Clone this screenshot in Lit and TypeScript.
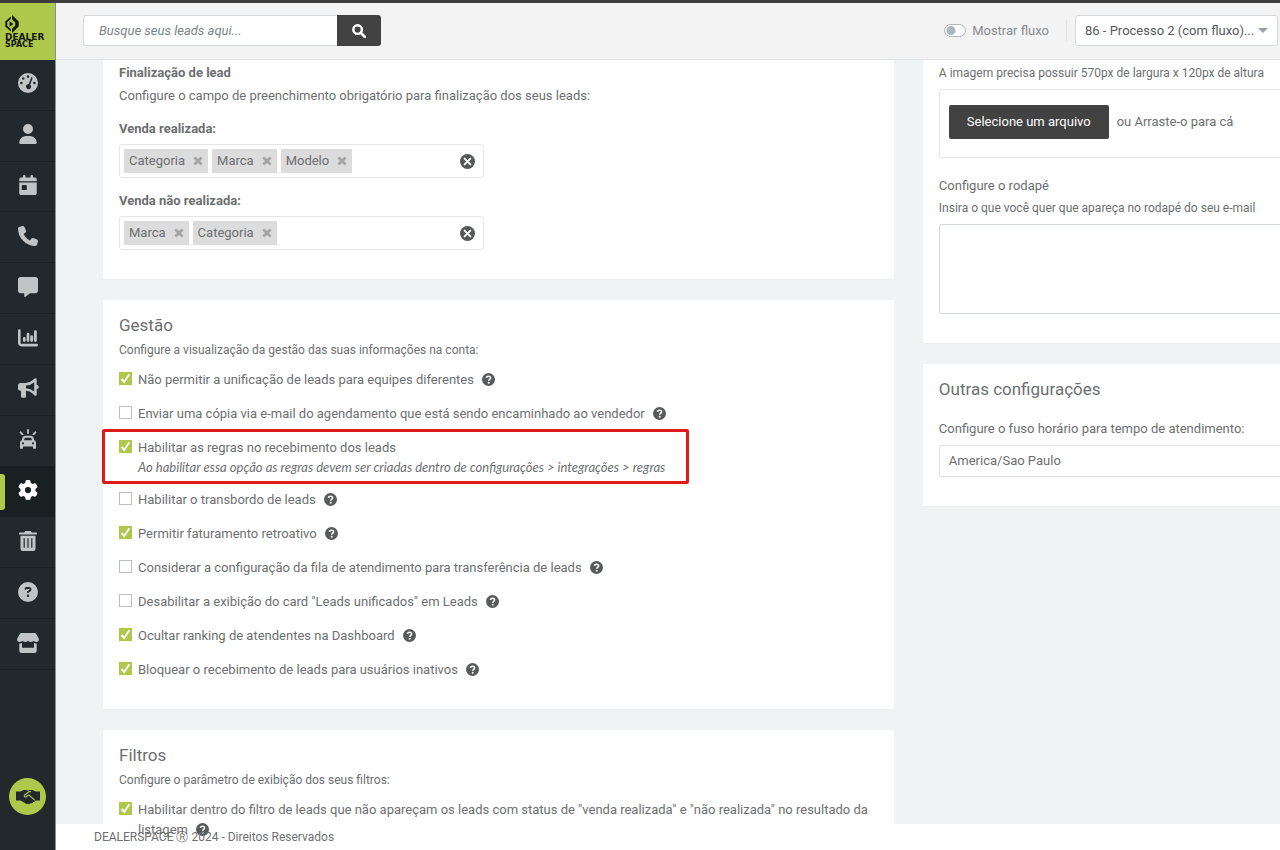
import { LitElement, html, css, svg, nothing, type TemplateResult } from "lit";
import { customElement, property, state } from "lit/decorators.js";
import { classMap } from "lit/directives/class-map.js";

const icons: Record<string, { box: string; shape: TemplateResult<2> }> = {
  gauge: {
    box: "0 0 20 20",
    shape: svg`<path fill-rule="evenodd" d="M10 0a10 10 0 1 0 0 20a10 10 0 0 0 0-20zM10 2.3a1.3 1.3 0 1 1 0 2.6a1.3 1.3 0 0 1 0-2.6zM5.2 4.2a1.3 1.3 0 1 1 0 2.6a1.3 1.3 0 0 1 0-2.6zM3.4 8.7a1.3 1.3 0 1 1 0 2.6a1.3 1.3 0 0 1 0-2.6zM16.4 8.7a1.3 1.3 0 1 1 0 2.6a1.3 1.3 0 0 1 0-2.6zM13.2 4.4a.8.8 0 0 1 1.4.7l-2.4 6.6a2.6 2.6 0 1 1-1.5-.6z"/>`,
  },
  user: {
    box: "0 0 448 512",
    shape: svg`<path d="M224 256A128 128 0 1 0 224 0a128 128 0 1 0 0 256zm-45.7 48C79.8 304 0 383.8 0 482.3C0 498.7 13.3 512 29.7 512H418.3c16.4 0 29.7-13.3 29.7-29.7C448 383.8 368.2 304 269.7 304H178.3z"/>`,
  },
  calendar: {
    box: "0 0 448 512",
    shape: svg`<path d="M128 0c17.7 0 32 14.3 32 32V64H288V32c0-17.7 14.3-32 32-32s32 14.3 32 32V64h48c26.5 0 48 21.5 48 48v48H0V112C0 85.5 21.5 64 48 64H96V32c0-17.7 14.3-32 32-32zM0 192H448V464c0 26.5-21.5 48-48 48H48c-26.5 0-48-21.5-48-48V192zm80 64c-8.8 0-16 7.2-16 16v96c0 8.8 7.2 16 16 16h96c8.8 0 16-7.2 16-16V272c0-8.8-7.2-16-16-16H80z"/>`,
  },
  phone: {
    box: "0 0 512 512",
    shape: svg`<path d="M164.9 24.6c-7.7-18.6-28-28.5-47.4-23.2l-88 24C12.1 30.2 0 46 0 64C0 311.4 200.6 512 448 512c18 0 33.8-12.1 38.6-29.5l24-88c5.3-19.4-4.6-39.7-23.2-47.4l-96-40c-16.3-6.8-35.2-2.1-46.3 11.6L304.7 368C234.3 334.7 177.3 277.7 144 207.3L193.3 167c13.7-11.2 18.4-30 11.6-46.3l-40-96z"/>`,
  },
  message: {
    box: "0 0 512 512",
    shape: svg`<path d="M64 0C28.7 0 0 28.7 0 64V352c0 35.3 28.7 64 64 64h96v80c0 6.1 3.4 11.6 8.8 14.3s11.9 2.1 16.8-1.5L309.3 416H448c35.3 0 64-28.7 64-64V64c0-35.3-28.7-64-64-64H64z"/>`,
  },
  chart: {
    box: "0 0 20 20",
    shape: svg`<g fill="none" stroke="currentColor" stroke-linecap="round" stroke-linejoin="round"><path stroke-width="2.6" d="M1.3 2.5v12.4a2.2 2.2 0 0 0 2.2 2.2h15.2"/><path stroke-width="2.8" d="M6.3 10.4v2.2M10 6.2v6.4M13.7 8.6v4M17.4 3.6v9"/></g>`,
  },
  megaphone: {
    box: "0 0 20 20",
    shape: svg`<path fill-rule="evenodd" d="M17.5.3a1.2 1.2 0 0 1 1.2 1.2v5.4a2 2 0 0 1 0 4.2v5.4a1.2 1.2 0 0 1-2.1.9l-1.7-1.7A10.500 10.500 0 0 0 8 12.800v5.700A1.300 1.300 0 0 1 6.700 19.800H4.300A1.300 1.300 0 0 1 3 18.500V12.800H2.500A2.500 2.500 0 0 1 0 10.300V7.500A2.500 2.500 0 0 1 2.500 5h4.900a10.500 10.500 0 0 0 7.400-3l1.800-1.400a1.200 1.200 0 0 1 .9-.3zM16.200 4.200A13 13 0 0 1 8 7.500v2.800a13 13 0 0 1 8.200 3.300z"/>`,
  },
  car: {
    box: "0 0 20 20",
    shape: svg`<path fill="none" stroke="currentColor" stroke-width="1.8" stroke-linecap="round" d="M10 1v3.200M2.500 3.300l2 2M17.500 3.300l-2 2"/><path fill-rule="evenodd" d="M6.800 6.800h6.400a2.200 2.200 0 0 1 2.100 1.500l1 3A2.600 2.600 0 0 1 18 13.700v5.200a.9.900 0 0 1-.9.900h-1.200a.9.900 0 0 1-.9-.9v-1.500H5v1.500a.9.900 0 0 1-.9.900H2.900a.9.900 0 0 1-.9-.9v-5.200a2.600 2.600 0 0 1 1.700-2.400l1-3a2.200 2.200 0 0 1 2.100-1.500zM7.200 8.800a.5.500 0 0 0-.5.400L6 11.200h8l-.7-2a.5.500 0 0 0-.5-.4zM5 13.200a1.100 1.100 0 1 0 0 2.200a1.100 1.100 0 0 0 0-2.200zM15 13.200a1.100 1.100 0 1 0 0 2.200a1.100 1.100 0 0 0 0-2.200z"/>`,
  },
  gear: {
    box: "0 0 512 512",
    shape: svg`<path d="M495.9 166.6c3.2 8.7 .5 18.4-6.4 24.6l-43.3 39.4c1.1 8.300 1.700 16.800 1.700 25.400s-.6 17.100-1.700 25.400l43.300 39.400c6.900 6.200 9.600 15.900 6.400 24.600c-4.400 11.900-9.700 23.300-15.800 34.300l-4.700 8.100c-6.600 11-14 21.400-22.100 31.200c-5.900 7.200-15.700 9.600-24.500 6.800l-55.700-17.700c-13.400 10.300-28.200 18.900-44 25.400l-12.500 57.100c-2 9.100-9 16.300-18.200 17.800c-13.800 2.300-28 3.500-42.500 3.500s-28.700-1.200-42.500-3.500c-9.200-1.500-16.200-8.700-18.200-17.800l-12.500-57.100c-15.800-6.500-30.600-15.100-44-25.400L83.100 425.900c-8.800 2.800-18.600 .3-24.500-6.800c-8.100-9.800-15.500-20.200-22.100-31.200l-4.700-8.100c-6.100-11-11.400-22.400-15.800-34.300c-3.200-8.700-.5-18.400 6.400-24.600l43.300-39.400C64.600 273.100 64 264.600 64 256s.6-17.100 1.700-25.400L22.400 191.200c-6.900-6.200-9.600-15.900-6.400-24.600c4.400-11.900 9.700-23.300 15.800-34.300l4.700-8.100c6.600-11 14-21.400 22.100-31.200c5.900-7.200 15.700-9.600 24.500-6.800l55.700 17.700c13.400-10.300 28.200-18.900 44-25.400l12.500-57.100c2-9.100 9-16.300 18.200-17.800C227.300 1.200 241.500 0 256 0s28.700 1.200 42.500 3.500c9.200 1.500 16.200 8.700 18.200 17.800l12.500 57.100c15.800 6.500 30.600 15.100 44 25.400l55.700-17.700c8.800-2.800 18.600-.3 24.500 6.800c8.100 9.800 15.500 20.200 22.100 31.200l4.700 8.100c6.100 11 11.400 22.400 15.800 34.300zM256 336a80 80 0 1 0 0-160 80 80 0 1 0 0 160z"/>`,
  },
  trash: {
    box: "0 0 20 20",
    shape: svg`<path fill-rule="evenodd" d="M7.300 0h5.400l1.100 1.400H18a1 1 0 0 1 0 2.200H2a1 1 0 0 1 0-2.200h4.200zM2.500 4.800h15v12.700A2.500 2.500 0 0 1 15 20H5a2.500 2.500 0 0 1-2.500-2.500zM5.600 7.200v9.600h1.200V7.200zM9.400 7.200v9.600h1.200V7.200zM13.200 7.200v9.600h1.200V7.200z"/>`,
  },
  question: {
    box: "0 0 512 512",
    shape: svg`<path d="M256 512A256 256 0 1 0 256 0a256 256 0 1 0 0 512zM169.800 165.300c7.900-22.300 29.100-37.300 52.800-37.300h58.300c34.900 0 63.100 28.300 63.100 63.100c0 22.600-12.100 43.500-31.700 54.800L280 264.400c-.2 13-10.900 23.600-24 23.600c-13.300 0-24-10.700-24-24V250.500c0-8.600 4.600-16.500 12.100-20.800l44.300-25.400c4.700-2.700 7.600-7.700 7.600-13.100c0-8.400-6.800-15.100-15.100-15.100H222.600c-3.400 0-6.400 2.100-7.500 5.300l-.4 1.200c-4.400 12.500-18.200 19-30.600 14.600s-19-18.200-14.600-30.600l.4-1.200zM224 352a32 32 0 1 1 64 0 32 32 0 1 1 -64 0z"/>`,
  },
  help: {
    box: "0 0 13 13",
    shape: svg`<circle cx="6.500" cy="6.500" r="6.500"/><path fill="none" stroke="#fff" stroke-width="1.600" d="M4.500 5.100c0-1.300.9-1.900 2-1.900s2.100.6 2.100 1.700c0 1.500-1.900 1.300-1.900 2.800"/><circle cx="6.700" cy="9.700" r="1" fill="#fff"/>`,
  },
  store: {
    box: "0 0 22 20",
    shape: svg`<path d="M4.300 0h13.400a1.500 1.500 0 0 1 1.300.7l2.500 4.200c1.100 1.900 0 4.100-2.100 4.100q-1.700 0-2.800-1.300q-1.100 1.300-2.800 1.300t-2.800-1.300q-1.100 1.300-2.800 1.300t-2.800-1.300q-1.100 1.300-2.800 1.300C.5 9-.6 6.800.5 4.900L3 .7A1.500 1.500 0 0 1 4.300 0zM2.300 10.400q1.500.1 2.700-.4v4.800h12V10q1.200.5 2.700.4v7.100a2.500 2.500 0 0 1-2.500 2.500H4.800a2.500 2.500 0 0 1-2.500-2.500z"/>`,
  },
  search: {
    box: "0 0 14 14",
    shape: svg`<circle cx="5.600" cy="5.600" r="4.300" fill="none" stroke="currentColor" stroke-width="2.400"/><path d="M9 9l4 4" stroke="currentColor" stroke-width="2.600" stroke-linecap="round"/>`,
  },
  clear: {
    box: "0 0 14 14",
    shape: svg`<circle cx="7" cy="7" r="7"/><path d="M4.300 4.300l5.400 5.400M9.700 4.300l-5.400 5.400" stroke="#fff" stroke-width="1.800" stroke-linecap="round"/>`,
  },
  cross: {
    box: "0 0 10 10",
    shape: svg`<path d="M1.400 1.400l7.200 7.200M8.600 1.400l-7.200 7.200" stroke="currentColor" stroke-width="2.800"/>`,
  },
  handshake: {
    box: "0 0 24 14",
    shape: svg`<path d="M0 1.500h4.500L7.500 0h3l1.500.8L13.500 0h3l3.200 1.500H24v9h-4.500a2 2 0 0 1-2.300 1.400a2 2 0 0 1-2.400 1.200a2.300 2.300 0 0 1-3 .6a2.600 2.600 0 0 1-2.600-.5L4.500 10.500H0z"/><path fill="none" stroke="#adc84b" stroke-width="1.200" stroke-linecap="round" stroke-linejoin="round" d="M14.500 1.600h-1.300L8.700 4.900a1.200 1.200 0 0 0 1.700 1.700l2.400-1.700 5.700 5"/>`,
  },
};

const icon = (name: string, cls = "icon") =>
  html`<svg class=${cls} viewBox=${icons[name].box} fill="currentColor" aria-hidden="true">${icons[name].shape}</svg>`;

const textColor = css`#6c6f71`;

@customElement("side-menu")
class SideMenu extends LitElement {
  static styles = css`
    :host { display: flex; flex-direction: column; background: #22292c; border-right: 1px solid #8b9192; }
    .logo { display: flex; flex-direction: column; height: 57px; box-sizing: border-box; padding: 12px 0 0 5px; background: #adc84b; color: #16190c; text-decoration: none; font: bold 9px/8px "DejaVu Sans", sans-serif; }
    .mark { width: 14px; height: 18px; }
    .light { font-size: 8px; line-height: 8px; }
    .menu { list-style: none; margin: 0; padding: 0; height: 610px; display: flex; flex-direction: column; }
    .item { flex: 1; display: flex; border-bottom: 1px solid #1a2023; }
    .link { flex: 1; display: flex; align-items: center; justify-content: center; padding-bottom: 3px; color: #c0c4c5; }
    .active { background: #1a1f22; color: #fff; }
    .active .link { color: #fff; position: relative; }
    .active .link::before { content: ""; position: absolute; left: 0; top: 7px; bottom: 6px; width: 5px; background: #adc84b; border-radius: 0 3px 3px 0; }
    .icon { width: 22px; height: 20px; }
    .deal { margin: auto auto 35px; width: 37px; height: 37px; border: 0; border-radius: 50%; padding: 0; display: grid; place-items: center; background: #adc84b; color: #22292c; }
    .shake { width: 24px; height: 14px; }
  `;
  private entries = [
    ["gauge", "Dashboard"], ["user", "Clientes"], ["calendar", "Agenda"], ["phone", "Telefonia"],
    ["message", "Mensagens"], ["chart", "Relatórios"], ["megaphone", "Campanhas"], ["car", "Veículos"],
    ["gear", "Configurações"], ["trash", "Lixeira"], ["question", "Ajuda"], ["store", "Loja"],
  ];
  render() {
    return html`
      <a class="logo" href="#">
        <svg class="mark" viewBox="0 0 14 18" fill="currentColor" aria-hidden="true"><path d="M5.800 1.500L.3 6.500v5l5.500 5v-2.300L2.200 10.700V7.300L5.800 3.800zM7 0l6.700 6.500v5L7 18v-4.200l3.300-3.300v-3L7 4.200zM4.600 6.200L8.400 9l-3.800 2.800z"/></svg>
        <span>DEALER</span><span class="light">SPACE</span>
      </a>
      <ul class="menu">
        ${this.entries.map(([name, label]) => html`
          <li class=${classMap({ item: true, active: name === "gear" })}>
            <a class="link" href="#" aria-label=${label}>${icon(name)}</a>
          </li>`)}
      </ul>
      <button class="deal" aria-label="Parcerias">${icon("handshake", "shake")}</button>
    `;
  }
}

@customElement("top-bar")
class TopBar extends LitElement {
  static styles = css`
    :host { display: flex; align-items: center; box-sizing: border-box; height: 57px; padding: 0 2px 1px 27px; background: #f3f3f4; border-bottom: 1px solid #dfe2e4; color: #8a8d8f; }
    .search { display: flex; margin-right: auto; }
    .query { width: 254px; height: 31px; box-sizing: border-box; border: 1px solid #d5dade; border-right: 0; border-radius: 3px 0 0 3px; padding: 0 15px; font: inherit; font-style: italic; background: #fff; color: #676a6c; outline: 0; }
    .query::placeholder { color: #7b8487; opacity: 1; }
    .go { width: 44px; border: 0; padding: 0; border-radius: 0 3px 3px 0; background: #424242; color: #fff; display: grid; place-items: center; }
    .glass { width: 14px; height: 14px; }
    .flow { display: flex; align-items: center; gap: 6px; }
    .toggle { appearance: none; margin: 0; width: 22px; height: 13px; box-sizing: border-box; border: 1px solid #adb5bd; border-radius: 7px; background: radial-gradient(circle at 6px 50%, #adb5bd 4px, #fff 5px); }
    .divider { width: 1px; height: 21px; margin: 0 8px 0 17px; background: #e2e5e7; }
    .picker { position: relative; display: flex; align-items: center; }
    .process { appearance: none; width: 203px; height: 31px; box-sizing: border-box; border: 1px solid #d5dade; border-radius: 3px; background: #fff; color: #565a5c; font: inherit; padding: 0 22px 0 9px; }
    .caret { position: absolute; right: 10px; border: 5px solid transparent; border-top-color: #9aa2a8; border-bottom: 0; pointer-events: none; }
  `;
  render() {
    return html`
      <form class="search" role="search">
        <input class="query" type="search" aria-label="Buscar leads" placeholder="Busque seus leads aqui..." />
        <button class="go" type="button" aria-label="Buscar">${icon("search", "glass")}</button>
      </form>
      <label class="flow"><input class="toggle" type="checkbox" role="switch" />Mostrar fluxo</label>
      <span class="divider"></span>
      <div class="picker">
        <select class="process" aria-label="Processo"><option>86 - Processo 2 (com fluxo)...</option></select>
        <span class="caret"></span>
      </div>
    `;
  }
}

@customElement("tag-field")
class TagField extends LitElement {
  static styles = css`
    :host { display: flex; align-items: center; gap: 4px; box-sizing: border-box; width: 365px; max-width: 100%; height: 34px; padding: 0 8px 0 4px; border: 1px solid #e5e6e7; border-radius: 3px; }
    .tag { display: flex; align-items: center; gap: 8px; height: 24px; padding: 0 5px; background: #dcdcdc; }
    .drop, .wipe { border: 0; padding: 0; background: none; display: flex; color: #a2a4a5; }
    .wipe { margin-left: auto; color: #565758; }
    .cross { width: 10px; height: 10px; }
    .clear { width: 15px; height: 15px; }
  `;
  @property({ type: Array }) tags: string[] = [];
  render() {
    return html`
      ${this.tags.map((tag) => html`<span class="tag">${tag}<button class="drop" aria-label="Remover ${tag}" @click=${() => (this.tags = this.tags.filter((t) => t !== tag))}>${icon("cross", "cross")}</button></span>`)}
      <button class="wipe" aria-label="Limpar" @click=${() => (this.tags = [])}>${icon("clear", "clear")}</button>
    `;
  }
}

interface Option { label: string; on?: boolean; help?: boolean; note?: string }

@customElement("option-list")
class OptionList extends LitElement {
  static styles = css`
    .list { list-style: none; margin: 0; padding: 0; display: flex; flex-direction: column; align-items: flex-start; gap: 14px; }
    .row { display: flex; gap: 6px; position: relative; line-height: 20px; }
    .box { appearance: none; flex: none; width: 13px; height: 13px; box-sizing: border-box; margin: 2px 0 0; border: 1px solid #b9bfc3; background: #fff; }
    .box:checked { border-color: #adc84b; background: #adc84b url("data:image/svg+xml,%3Csvg xmlns='http://www.w3.org/2000/svg' viewBox='0 0 11 11'%3E%3Cpath d='M1.500 6l2.700 3L9.300 1.200' fill='none' stroke='%23fff' stroke-width='1.900'/%3E%3C/svg%3E"); }
    .note { display: block; font-family: Lato, sans-serif; font-style: italic; line-height: 18px; }
    .help { width: 13px; height: 13px; margin-left: 8px; color: #58595a; vertical-align: -2px; }
    .marked::after { content: ""; position: absolute; inset: -9px -24px -8px -17px; border: 3px solid #e01a1a; border-radius: 2px; pointer-events: none; }
  `;
  @property({ type: Array }) options: Option[] = [];
  render() {
    return html`<ul class="list">
      ${this.options.map((o, i) => html`
        <li class=${classMap({ row: true, marked: !!o.note })}>
          <input class="box" type="checkbox" id="o${i}" .checked=${!!o.on} />
          <label for="o${i}">${o.label}${o.help ? icon("help", "help") : nothing}${o.note ? html`<em class="note">${o.note}</em>` : nothing}</label>
        </li>`)}
    </ul>`;
  }
}

@customElement("app-root")
class AppRoot extends LitElement {
  static styles = css`
    :host { display: grid; grid-template-columns: 56px minmax(0, 1fr); height: 100vh; box-sizing: border-box; border-top: 3px solid #3c3c3c; overflow: hidden; background: #fff; color: ${textColor}; font: 13px/20px Roboto, sans-serif; }
    .page { display: flex; flex-direction: column; min-height: 0; }
    .content { flex: 1; min-height: 0; display: grid; grid-template-columns: minmax(0, 31fr) minmax(0, 14fr); gap: 29px; align-items: start; padding-left: 47px; background: #eff3f4; }
    .column { display: flex; flex-direction: column; gap: 20px; }
    .wide { margin-right: -24px; }
    .card { background: #fff; padding: 13px 16px 29px; border: 1px solid #eceff0; border-width: 0 0 1px; }
    .cut { padding-top: 3px; }
    .title { margin: 0; font-size: 17px; line-height: 24px; font-weight: normal; }
    .strong { margin: 0; font-size: 13px; font-weight: bold; }
    .lead { margin: 3px 0 13px; }
    .small { margin: 3px 0 10px; font-size: 12px; }
    .hint { margin: 2px 0 6px; font-size: 12px; }
    .hint:first-child { margin-top: 0; }
    .field { margin: 5px 0 13px; }
    .field:last-child { margin-bottom: 0; }
    .drop { display: flex; align-items: center; gap: 8px; height: 69px; box-sizing: border-box; padding: 0 9px 4px; margin-bottom: 18px; border: 1px solid #e5e6e7; border-radius: 2px; }
    .pick { height: 34px; padding: 0 18px; border: 0; border-radius: 2px; background: #424242; color: #fff; font: inherit; }
    .text { display: block; width: 100%; height: 90px; box-sizing: border-box; border: 1px solid #d3d8db; border-radius: 2px; resize: none; background: #fff; }
    .label { display: block; }
    .zone-label { display: block; margin: 18px 0 6px; }
    .zone { appearance: none; display: block; width: 100%; height: 32px; box-sizing: border-box; padding: 0 9px; border: 1px solid #dfe2e4; border-radius: 2px; background: #fff; color: inherit; font: inherit; }
    .foot { position: relative; z-index: 1; height: 26px; line-height: 26px; padding-left: 38px; font-size: 12px; }
  `;
  @state() private rules: Option[] = [
    { label: "Não permitir a unificação de leads para equipes diferentes", on: true, help: true },
    { label: "Enviar uma cópia via e-mail do agendamento que está sendo encaminhado ao vendedor", help: true },
    { label: "Habilitar as regras no recebimento dos leads", on: true, note: "Ao habilitar essa opção as regras devem ser criadas dentro de configurações > integrações > regras" },
    { label: "Habilitar o transbordo de leads", help: true },
    { label: "Permitir faturamento retroativo", on: true, help: true },
    { label: "Considerar a configuração da fila de atendimento para transferência de leads", help: true },
    { label: 'Desabilitar a exibição do card "Leads unificados" em Leads', help: true },
    { label: "Ocultar ranking de atendentes na Dashboard", on: true, help: true },
    { label: "Bloquear o recebimento de leads para usuários inativos", on: true, help: true },
  ];
  @state() private filters: Option[] = [
    { label: 'Habilitar dentro do filtro de leads que não apareçam os leads com status de "venda realizada" e "não realizada" no resultado da listagem', on: true, help: true },
  ];
  render() {
    return html`
      <side-menu></side-menu>
      <div class="page">
        <top-bar></top-bar>
        <main class="content">
          <div class="column">
            <section class="card cut">
              <h3 class="strong">Finalização de lead</h3>
              <p class="lead">Configure o campo de preenchimento obrigatório para finalização dos seus leads:</p>
              <h4 class="strong">Venda realizada:</h4>
              <tag-field class="field" .tags=${["Categoria", "Marca", "Modelo"]}></tag-field>
              <h4 class="strong">Venda não realizada:</h4>
              <tag-field class="field" .tags=${["Marca", "Categoria"]}></tag-field>
            </section>
            <section class="card">
              <h2 class="title">Gestão</h2>
              <p class="small">Configure a visualização da gestão das suas informações na conta:</p>
              <option-list .options=${this.rules}></option-list>
            </section>
            <section class="card">
              <h2 class="title">Filtros</h2>
              <p class="small">Configure o parâmetro de exibição dos seus filtros:</p>
              <option-list .options=${this.filters}></option-list>
            </section>
          </div>
          <div class="column wide">
            <section class="card cut">
              <p class="hint">A imagem precisa possuir 570px de largura x 120px de altura</p>
              <div class="drop"><button class="pick">Selecione um arquivo</button>ou Arraste-o para cá</div>
              <label class="label" for="footer-text">Configure o rodapé</label>
              <p class="hint">Insira o que você quer que apareça no rodapé do seu e-mail</p>
              <textarea class="text" id="footer-text"></textarea>
            </section>
            <section class="card">
              <h2 class="title">Outras configurações</h2>
              <label class="zone-label" for="zone">Configure o fuso horário para tempo de atendimento:</label>
              <select class="zone" id="zone"><option>America/Sao Paulo</option></select>
            </section>
          </div>
        </main>
        <footer class="foot">DEALERSPACE Ⓡ 2024 - Direitos Reservados</footer>
      </div>
    `;
  }
}
